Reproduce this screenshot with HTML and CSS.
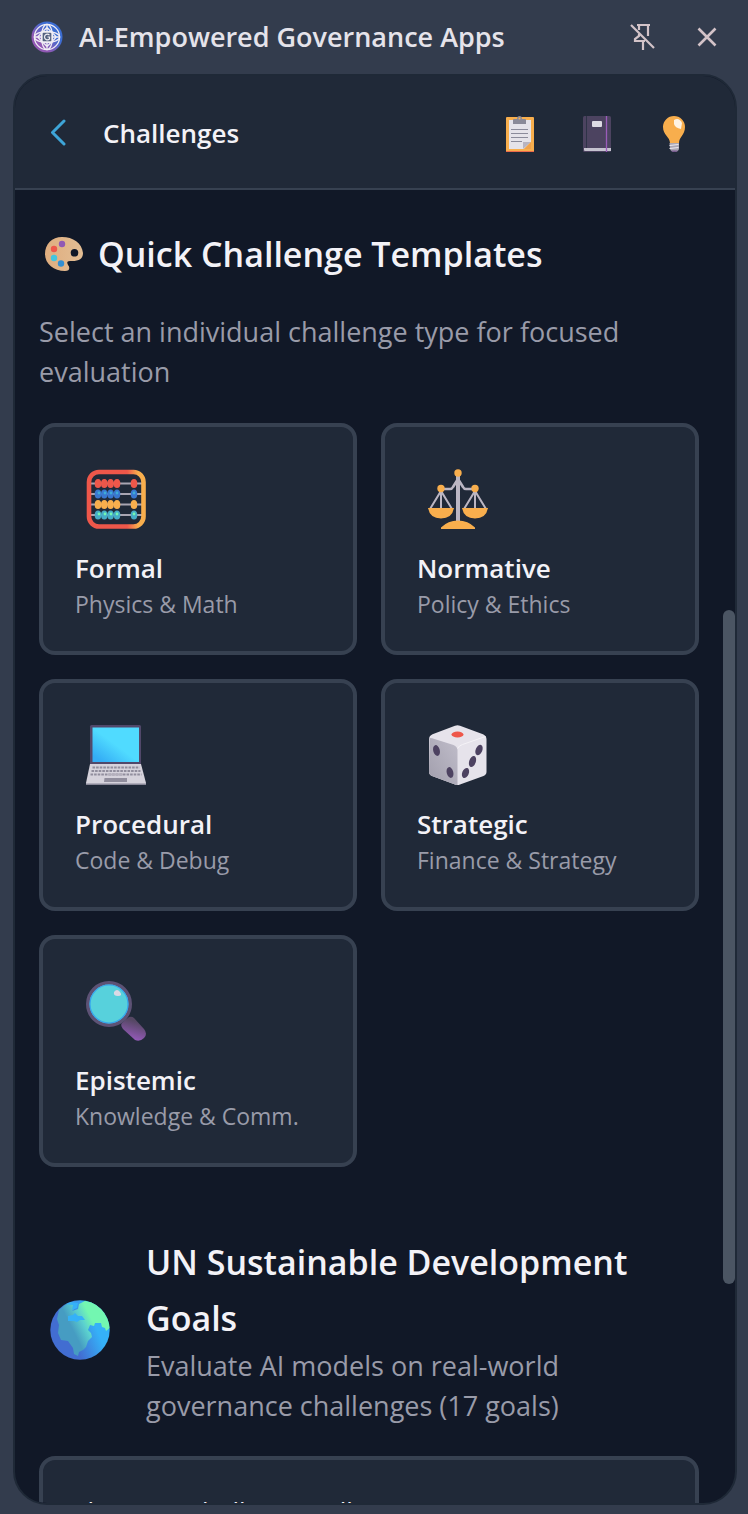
FILE: index.html
```html
<!DOCTYPE html>
<html lang="en">
<head>
<meta charset="utf-8">
<meta name="viewport" content="width=device-width, initial-scale=1">
<title>AI-Empowered Governance Apps</title>
<link rel="stylesheet" href="styles.css">
</head>
<body>
<header class="titlebar">
  <svg class="logo" viewBox="0 0 32 32" aria-hidden="true">
    <defs><linearGradient id="lg" x1="0" y1="1" x2="1" y2="0"><stop offset=".3" stop-color="#9159b4"/><stop offset=".65" stop-color="#3c6dd2"/></linearGradient></defs>
    <circle cx="16" cy="16" r="15.5" fill="url(#lg)"/>
    <g fill="none" stroke="#f1eef5" stroke-width="1.3">
      <circle cx="16" cy="16" r="12.6"/>
      <ellipse cx="16" cy="16" rx="12.6" ry="5.6"/>
      <ellipse cx="16" cy="16" rx="5.6" ry="12.6"/>
      <path d="M16 6.5 25.5 16 16 25.5 6.500 16ZM16 3.400v7M16 21.500v7M3.400 16h7M21.500 16h7"/>
      <rect x="11" y="11" width="10" height="10" rx="1.500" fill="#54617f"/>
      <path d="M18.500 14.200c-2-2-5-.7-5 1.800s3 3.800 5 2v-2h-2" stroke-width="1.200"/>
    </g>
  </svg>
  <h1 class="titlebar-name">AI-Empowered Governance Apps</h1>
  <button class="icon-button" type="button" aria-label="Unpin side panel">
    <svg class="pin" viewBox="0 0 26 28" fill="none" stroke="#d3c3c8" stroke-width="2.200" aria-hidden="true">
      <path d="M1 2 24 25M7 2h13M9 2v5M18 2v11M9 11v2l-4 3v2h10M13 18v9"/>
    </svg>
  </button>
  <button class="icon-button" type="button" aria-label="Close side panel">
    <svg class="close" viewBox="0 0 20 20" fill="none" stroke="#d3c3c8" stroke-width="2.600" aria-hidden="true"><path d="M1.500 1.500l17 17M18.500 1.500l-17 17"/></svg>
  </button>
</header>
<main class="panel">
  <header class="panel-header">
    <button class="icon-button" type="button" aria-label="Back">
      <svg class="chevron" viewBox="0 0 16 28" fill="none" stroke="#3ea5d8" stroke-width="3" stroke-linecap="round" stroke-linejoin="round" aria-hidden="true"><path d="M14 2 2.500 13.500 14 25"/></svg>
    </button>
    <h2 class="panel-title">Challenges</h2>
    <nav class="tools" aria-label="Panel tools">
      <button class="icon-button" type="button" aria-label="Results">
        <svg class="tool" viewBox="0 0 28 36" aria-hidden="true">
          <rect y="1" width="28" height="35" rx="1" fill="#f8ae4d"/><path d="M0 35h28v1H0z" fill="#ec6a4a"/>
          <path d="M3 4h22v22l-7 7H3z" fill="#e5e3ea"/><path d="M17 33v-7h8z" fill="#b8b4c1"/><path d="M18 33l7-7v7z" fill="#f0a24c"/>
          <path d="M7 8V4q0-1 1-1h3q0-3 2.500-3T16 3h3q1 0 1 1v4z" fill="#8a8a99"/><circle cx="13.500" cy="2.500" r="1" fill="#f8ae4d"/>
          <path d="M5 13.500h17M5 17.500h17M5 21.500h17M5 25.500h11" stroke="#8b8b9b" stroke-width="1.200"/>
        </svg>
      </button>
      <button class="icon-button" type="button" aria-label="Journal">
        <svg class="tool" viewBox="0 0 28 36" aria-hidden="true">
          <rect width="28" height="36" rx="1.500" fill="#4c4360"/><path d="M1 32h27v3H2q-1 0-1-1z" fill="#c5c2cf"/>
          <path d="M3.500 0v32" stroke="#2e3347"/><path d="M23.500 0v36" stroke="#9b5cba" stroke-width="1.300"/>
          <rect x="9" y="5" width="10" height="6" rx="1" fill="#dedbe4"/>
        </svg>
      </button>
      <button class="icon-button" type="button" aria-label="Tips">
        <svg class="tool" viewBox="0 0 28 36" aria-hidden="true">
          <path d="M14 0a11 11 0 0 1 11 11c0 8-6 10-6 16h-9C10 21 3 19 3 11A11 11 0 0 1 14 0z" fill="#f8ae4d"/>
          <path d="M14 4q5-3 8 3l-1 6q-6-1-7-5z" fill="#fff" opacity=".85"/>
          <path d="M9.500 27h9.500v6q-1 3-4.500 3T10 33z" fill="#aaa6b3"/><path d="M9.500 29.500l9-1M9.500 32.500l9-1" stroke="#eeebf1" stroke-width="1"/><path d="M11 34.500h7q-1 1.500-3.500 1.500T11 34.500z" fill="#75578d"/>
        </svg>
      </button>
    </nav>
  </header>
  <div class="viewport">
    <div class="content">
      <section class="templates">
        <h2 class="heading heading-icon">
          <svg class="palette" viewBox="0 0 38 34" aria-hidden="true">
            <defs><linearGradient id="pal"><stop stop-color="#dfad7f"/><stop offset="1" stop-color="#e3be94"/></linearGradient></defs>
            <path d="M17 0C7 0 0 7 0 17c0 10 9 17 20 17 5 0 5-4 3-6-2-4 0-4 4-4 8 0 11-3 11-8C37 6 28 0 17 0zM29.500 12a3.800 3.800 0 1 1 0 7.600 3.800 3.800 0 0 1 0-7.600z" fill="url(#pal)" fill-rule="evenodd"/>
            <circle cx="17" cy="7" r="3.200" fill="#9159b4"/><circle cx="9" cy="12" r="3.200" fill="#ee574a"/><circle cx="9" cy="21" r="3.200" fill="#43c5df"/><circle cx="16" cy="26.500" r="3.200" fill="#338fd2"/>
          </svg>
          Quick Challenge Templates
        </h2>
        <p class="lead">Select an individual challenge type for focused evaluation</p>
        <div class="grid">
          <button class="card" type="button">
            <svg class="emoji" viewBox="0 0 60 60" aria-hidden="true">
              <defs>
                <linearGradient id="ab"><stop offset=".7" stop-color="#ee574a"/><stop offset=".9" stop-color="#f8ae4d"/></linearGradient>
                <g id="row"><path d="M4 0h52" stroke="#a9a5b2" stroke-width="2"/><ellipse cx="12" rx="3.300" ry="4.600"/><ellipse cx="18.300" rx="3.300" ry="4.600"/><ellipse cx="24.600" rx="3.300" ry="4.600"/><ellipse cx="31" rx="3.300" ry="4.600"/><ellipse cx="48" rx="3.300" ry="4.600"/></g>
              </defs>
              <use href="#row" y="14.500" fill="#ee574a"/><use href="#row" y="25" fill="#3977cf"/><use href="#row" y="35.500" fill="#f8ae4d"/><use href="#row" y="46" fill="#45acc6"/>
              <g fill="#3dacd8"><circle cx="13" cy="24" r="1.400"/><circle cx="19" cy="24" r="1.400"/><circle cx="25" cy="24" r="1.400"/><circle cx="31" cy="24" r="1.400"/><circle cx="48" cy="24" r="1.400"/></g>
              <g fill="#73f7b1"><circle cx="13" cy="45" r="1.400"/><circle cx="19" cy="45" r="1.400"/><circle cx="25" cy="45" r="1.400"/><circle cx="31" cy="45" r="1.400"/><circle cx="48" cy="45" r="1.400"/></g>
              <rect x="3" y="3" width="54.500" height="54.500" rx="10" fill="none" stroke="url(#ab)" stroke-width="4.600"/>
            </svg>
            <span class="card-title">Formal</span><span class="card-sub">Physics &amp; Math</span>
          </button>
          <button class="card" type="button">
            <svg class="emoji" viewBox="0 0 60 60" aria-hidden="true">
              <g fill="none" stroke="#bbb6c3" stroke-width="2"><path d="M30 6v46" stroke-width="4"/><path d="M13 20h9q2 0 3-2l5-8 5 8q1 2 3 2h9" stroke-width="2.600"/><path d="M2 40 13 22l11 18M13 22v18M36 40l11-18 11 18M47 22v18"/></g>
              <g fill="#f8ae4d"><circle cx="30" cy="4" r="3.700"/><circle cx="13" cy="19.500" r="3.700"/><circle cx="47" cy="19.500" r="3.700"/><path d="M0 39h26q-2 10.500-13 10.500T0 39zM34 39h26q-2 10.500-13 10.500T34 39zM13 60v-1.500q7-7 17-7t17 7V60z"/></g>
            </svg>
            <span class="card-title">Normative</span><span class="card-sub">Policy &amp; Ethics</span>
          </button>
          <button class="card" type="button">
            <svg class="emoji" viewBox="0 0 60 60" aria-hidden="true">
              <defs><linearGradient id="scr" x1="0" y1="1" x2="1" y2="0"><stop offset=".1" stop-color="#34adf5"/><stop offset=".5" stop-color="#50dbff"/></linearGradient></defs>
              <rect x="4" y="0" width="51" height="40" rx="1.500" fill="#51486a"/><rect x="6.500" y="2.500" width="46.500" height="34.500" fill="url(#scr)"/>
              <path d="M4 39h51l5 19v2H0v-2z" fill="#d6d3dc"/><path d="M0 58.500h60V60H0z" fill="#888797"/>
              <path d="M6.500 42.500h47M5.500 46h49M4.500 49.500h51" stroke="#918e9d" stroke-width="2.200" stroke-dasharray="2.600 1"/>
              <path d="M22 49.500h15" stroke="#b4b0bc" stroke-width="2"/><path d="M18.500 53h22.500v4h-23z" fill="#918e9d"/>
            </svg>
            <span class="card-title">Procedural</span><span class="card-sub">Code &amp; Debug</span>
          </button>
          <button class="card" type="button">
            <svg class="emoji" viewBox="0 0 60 60" aria-hidden="true">
              <defs><linearGradient id="die" x1="1" y1="0" x2="0" y2="1"><stop stop-color="#c0bdca"/><stop offset="1" stop-color="#a19eac"/></linearGradient></defs>
              <path d="M27 .7q2.500-1 5 0l23 8.500q3.500 1.500 3.500 5v32.500q0 3-3 4.300L32 59.400q-2.500 1-5 0L4 51q-3-1.300-3-4.300V14.200q0-3.500 3.500-5z" fill="#e6e3eb"/>
              <path d="M1.500 13q3 0 5 1l19 6q4 2 4 5v35q-1.500 0-2.500-.6L4 51q-3-1.300-3-4.300z" fill="url(#die)"/>
              <path d="M29.500 23.500q1.500-3 5-4l23-8" fill="none" stroke="#f5f3f7"/>
              <ellipse cx="29.500" cy="9.500" rx="6" ry="3" fill="#ee574a"/>
              <g fill="#4d4261"><ellipse cx="8.500" cy="25.500" rx="3.300" ry="5.500" transform="rotate(-14 8.500 25.500)"/><ellipse cx="22" cy="47.500" rx="3.300" ry="5.500" transform="rotate(-14 22 47.500)"/><ellipse cx="51" cy="25" rx="3.300" ry="5.500" transform="rotate(22 51 25)"/><ellipse cx="44.500" cy="36.500" rx="3.300" ry="5.800" transform="rotate(18 44.500 36.500)"/><ellipse cx="37.500" cy="48" rx="3.300" ry="5.300" transform="rotate(22 37.500 48)"/></g>
            </svg>
            <span class="card-title">Strategic</span><span class="card-sub">Finance &amp; Strategy</span>
          </button>
          <button class="card" type="button">
            <svg class="emoji" viewBox="0 0 60 60" aria-hidden="true">
              <defs><linearGradient id="hnd" x1=".7" y1="0" x2=".4" y2="1"><stop offset=".2" stop-color="#554763"/><stop offset=".9" stop-color="#9159b4"/></linearGradient></defs>
              <path d="M39 39l4-3q3-1 5 1l10 11q4 5 0 9t-9 2L37 48q-3-4-1-6z" fill="url(#hnd)"/>
              <circle cx="23" cy="23" r="21.200" fill="#57d1dc" stroke="#5d5275" stroke-width="3.600"/><circle cx="23" cy="23" r="19" fill="none" stroke="#35a5ee" stroke-width="1.200"/>
              <path d="M28 11q3-4 6 0t-2 4-4-4z" fill="#d9d9e5"/>
            </svg>
            <span class="card-title">Epistemic</span><span class="card-sub">Knowledge &amp; Comm.</span>
          </button>
        </div>
      </section>
      <section class="goals">
        <div class="goals-head">
          <svg class="emoji" viewBox="0 0 60 60" aria-hidden="true">
            <defs>
              <linearGradient id="sea" x1="0" y1=".7" x2="1" y2=".3"><stop offset=".35" stop-color="#426dd1"/><stop offset=".75" stop-color="#35b1f8"/></linearGradient>
              <linearGradient id="land" x1="0" y1=".7" x2="1" y2=".2"><stop offset=".3" stop-color="#469cc2"/><stop offset=".5" stop-color="#5bd0cf"/><stop offset=".65" stop-color="#73f7b1"/></linearGradient>
              <clipPath id="disc"><circle cx="30" cy="30" r="29.700"/></clipPath>
            </defs>
            <g clip-path="url(#disc)"><path d="M0 0h60v60H0z" fill="url(#sea)"/>
              <path d="M9 10l6-5 6-3 3 2 1 4-3 3 6-2 1-5 6-3 8 1 10 6 8 12 1 6-6 5-1-3-3-1-1-4-6 0-1 3-4-1-2 5 3 3 1 4-4 4-2 6-3 3-4 2-1 4-4-2-1-6-5-7-7-1-3-7 1-8-2-6z" fill="url(#land)"/>
              <path d="M18 16l5-1 2-2 3 3 4 0 3 4-5 0-3 2-3-1-6 0zM15 4l7-2 6 1-1 5-5 2 1-5z" fill="#35b1f8"/>
            </g>
          </svg>
          <div class="goals-text">
            <h2 class="heading">UN Sustainable Development Goals</h2>
            <p class="lead">Evaluate AI models on real-world governance challenges (17 goals)</p>
          </div>
        </div>
        <select class="picker" aria-label="Challenge collection"><option>Choose a challenge collection</option></select>
      </section>
    </div>
    <div class="scroll-thumb"></div>
  </div>
</main>
</body>
</html>
```
FILE: styles.css
```css
* { box-sizing: border-box; }
html, body { height: 100%; }
body {
  margin: 0;
  display: flex;
  flex-direction: column;
  overflow: hidden;
  background: #333c4d;
  color: #f3f2f7;
  font-family: "Open Sans", "Noto Sans", sans-serif;
  font-size: 27px;
}
h1, h2, p { margin: 0; }
svg { display: block; flex: none; }
button { font: inherit; color: inherit; cursor: pointer; }
.icon-button { padding: 0; border: 0; background: none; }

.titlebar {
  flex: none;
  display: flex;
  align-items: center;
  height: 74px;
  padding: 0 31px;
}
.logo { width: 32px; height: 32px; }
.titlebar-name {
  flex: 1;
  padding-left: 16px;
  font-size: 27px;
  font-weight: 600;
  line-height: 40px;
  color: #e5e3ea;
}
.pin { width: 26px; height: 28px; }
.close { width: 20px; height: 20px; margin-left: 41px; }

.panel {
  flex: 1;
  min-height: 0;
  display: flex;
  flex-direction: column;
  margin: 0 11px 9px 13px;
  overflow: hidden;
  border: 2px solid #1f2937;
  border-radius: 34px;
  background: #111827;
}
.panel-header {
  flex: none;
  display: flex;
  align-items: center;
  height: 114px;
  padding: 2px 47px 0 35px;
  border-bottom: 2px solid #374151;
  background: #202938;
}
.chevron { width: 16px; height: 28px; }
.panel-title {
  flex: 1;
  padding-left: 37px;
  font-size: 26px;
  font-weight: 600;
  line-height: 40px;
}
.tools { display: flex; gap: 49px; padding-top: 2px; }
.tool { width: 28px; height: 36px; }

.viewport { flex: 1; min-height: 0; position: relative; overflow: hidden; }
.scroll-thumb {
  position: absolute;
  top: 32%;
  right: 0;
  bottom: 16.7%;
  width: 12px;
  border-radius: 6px;
  background: #4b5563;
}
.content { padding: 36px 36px 36px 24px; }
.heading { font-size: 34px; font-weight: 600; line-height: 56px; }
.heading-icon { display: flex; align-items: center; gap: 15px; padding-left: 6px; }
.palette { width: 38px; height: 34px; }
.lead { color: #999ba9; line-height: 40px; }
.templates .lead { margin: 30px 0 31px; }

.grid { display: grid; grid-template-columns: 1fr 1fr; gap: 24px; }
.card {
  display: flex;
  flex-direction: column;
  align-items: flex-start;
  padding: 42px 32px 29px;
  border: 4px solid #374151;
  border-radius: 16px;
  background: #202938;
  text-align: left;
}
.emoji { width: 60px; height: 60px; margin-left: 11px; }
.card-title { margin-top: 21px; font-size: 26px; font-weight: 600; line-height: 36px; }
.card-sub { font-size: 23px; line-height: 36px; color: #999ba9; }

.goals { margin-top: 67px; }
.goals-head { display: flex; align-items: center; gap: 36px; }
.picker {
  appearance: none;
  display: block;
  width: 100%;
  height: 110px;
  margin-top: 30px;
  padding: 0 28px;
  border: 4px solid #374151;
  border-radius: 16px;
  background: #202938;
  color: #f3f2f7;
  font: inherit;
  font-size: 26px;
}
```
